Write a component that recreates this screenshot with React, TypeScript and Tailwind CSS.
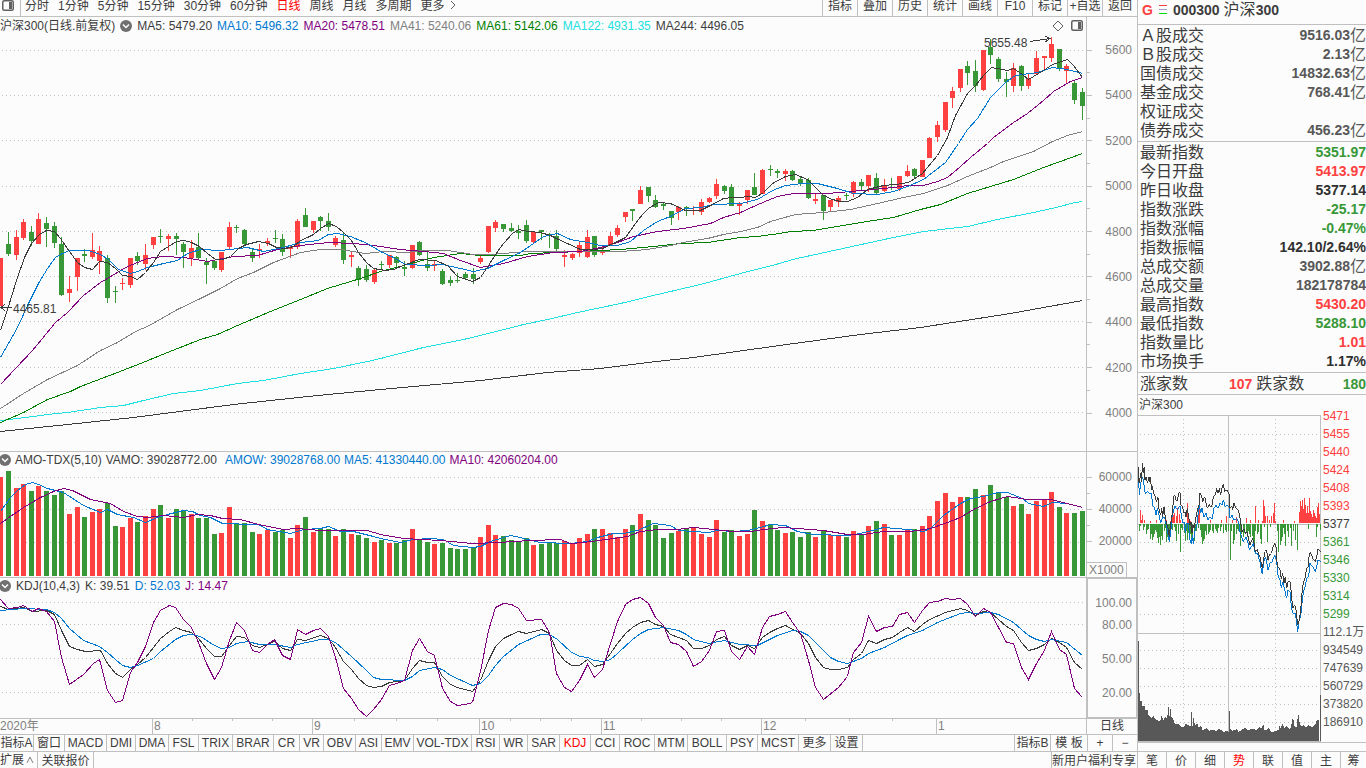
// ─── Index workstation: daily chart, indicators and quote panel ───────────────
import type { ReactNode } from 'react'

// ── Colours ───────────────────────────────────────────────────────────────────
const RED = '#ff4040'
const GREEN = '#389838'
const DARK = '#3c3c3c'
const BLUE = '#0078d0'
const PURPLE = '#800080'
const GRID = '#c0c0c0'

// ── Chart data ────────────────────────────────────────────────────────────────
// One session per entry: direction, high, body top, body bottom, low
const CANDLES = `r 258 258 306 306|g 232 244 254 256|r 230 237 255 260|r 219 222 238 240|g 226 232 241 246|r 213 219 244 244|g 217 223 229 247|g 222 226 243 248|g 237 244 295 296|r 276 289 293 302
r 258 258 277 291|g 249 254 256 262|r 233 250 257 259|r 246 251 261 274|g 255 258 298 303|g 286 291 292 303|r 278 283 284 290|r 258 258 285 288|g 252 256 261 265|r 244 255 264 270
r 237 237 245 249|g 229 236 237 243|r 234 236 239 251|g 233 236 239 255|g 242 244 252 268|r 240 248 258 266|g 233 247 258 259|g 258 262 265 284|g 261 261 268 270|r 252 252 270 272
r 222 227 247 249|g 225 227 228 233|g 229 230 244 245|g 249 252 258 262|r 244 249 250 258|r 238 241 243 246|g 230 238 239 243|g 234 239 252 256|r 246 247 249 258|r 219 221 247 249
g 208 215 227 227|r 221 221 230 233|g 216 217 221 231|g 213 221 227 231|r 236 238 245 247|g 233 240 260 264|r 252 255 257 267|g 266 268 280 286|g 265 269 280 282|r 269 270 282 284
g 261 264 265 270|r 255 255 265 268|g 256 257 263 267|g 261 267 269 276|r 245 245 268 269|g 241 242 255 256|g 252 264 268 271|r 261 264 266 271|g 269 271 284 285|g 276 280 283 286
g 273 280 281 283|g 272 274 278 279|g 268 274 279 284|r 256 258 262 264|r 226 226 252 253|r 220 222 228 232|g 224 224 229 232|g 223 228 231 232|g 225 231 233 239|g 220 225 241 243
r 232 232 242 244|g 230 230 232 240|g 233 234 235 248|g 230 236 249 251|r 250 255 257 267|r 253 254 258 260|r 241 245 253 257|r 230 237 257 258|g 236 236 255 257|r 245 250 253 255
r 232 236 245 246|r 225 228 235 237|r 212 212 217 222|g 209 209 211 221|r 186 190 204 204|g 187 187 196 202|g 195 200 207 208|g 202 204 206 210|g 211 211 218 225|r 206 207 212 220
g 206 207 209 216|r 206 210 211 215|r 199 202 212 215|r 197 198 202 203|r 179 184 196 199|g 185 186 191 194|g 184 187 206 206|r 202 204 206 215|r 190 190 200 204|g 173 187 195 195
r 169 170 194 194|g 165 169 170 176|g 169 171 173 178|r 169 171 174 181|g 170 171 180 181|g 177 179 183 186|g 178 180 198 199|r 194 199 201 204|g 195 195 211 220|r 200 200 207 211
r 196 198 202 207|g 193 195 196 200|r 181 182 194 197|g 179 182 186 191|r 175 175 186 192|g 173 178 193 194|r 179 185 191 192|g 178 184 185 190|r 176 176 189 191|r 165 171 176 177
g 168 169 176 178|r 160 160 177 177|r 137 138 158 158|r 121 125 137 142|r 102 102 130 132|r 87 91 98 108|r 69 69 88 92|g 61 66 73 85|g 60 71 86 92|r 50 50 90 91
g 39 47 55 64|g 57 59 79 82|g 72 79 82 97|r 63 68 86 92|g 65 66 86 91|r 74 78 86 89|r 51 58 74 74|r 56 56 58 70|r 37 44 58 62|g 49 49 69 71
r 64 66 71 84|g 81 83 100 104|g 88 92 106 120`
  .split(/[|\n]/)
  .map(row => {
    const [dir, ...ys] = row.split(' ')
    const [high, top, bottom, low] = ys.map(Number)
    return { color: dir === 'r' ? RED : GREEN, high, top, bottom, low }
  })

const AMOUNTS = [
  99, 105, 88, 92, 85, 90, 85, 81, 85, 62, 69, 59, 64, 67, 73, 50, 49, 58, 54, 60, 67, 71, 58, 67, 65, 62, 58, 58, 42,
  43, 69, 53, 53, 44, 42, 46, 44, 46, 38, 51, 59, 44, 47, 47, 40, 47, 42, 41, 38, 34, 36, 33, 33, 36, 47, 37, 34, 32,
  33, 28, 27, 27, 29, 39, 51, 41, 40, 36, 35, 38, 31, 32, 33, 33, 35, 33, 38, 42, 47, 47, 43, 39, 47, 51, 62, 56, 51,
  38, 43, 45, 47, 49, 42, 39, 56, 44, 46, 40, 42, 66, 55, 52, 46, 43, 44, 39, 44, 39, 46, 41, 41, 39, 45, 42, 50, 55,
  52, 41, 41, 46, 47, 50, 60, 75, 83, 74, 79, 79, 87, 81, 91, 83, 79, 70, 72, 62, 75, 76, 84, 69, 63, 63, 65,
]

const MAIN_LINES = [
  {
    color: DARK,
    points: '0,431 67,424 133,417 233,404 317,395 380,389 480,380 547,372 600,368 647,362 693,357 779,345 860,334 920,327 1010,313 1082,300',
  },
  {
    color: '#20e0e0',
    points: '0,420 33,416 47,414 67,412 100,407 123,405 143,400 173,393 200,390 237,383 263,380 300,373 333,368 367,361 380,358 423,347 463,339 500,330 523,324 547,319 577,312 620,303 657,294 700,284 740,273 779,263 792,259 847,247 893,237 923,231 967,226 997,219 1033,212 1060,206 1070,203 1082,201',
  },
  {
    color: '#008000',
    points: '0,422 23,412 47,399 70,391 80,386 117,372 140,363 167,352 200,339 217,334 237,325 270,311 300,299 327,288 360,278 380,271 403,265 433,257 460,253 480,255 520,255 530,253 580,251 620,249 653,246 680,243 707,242 740,237 757,236 779,233 790,231 813,230 837,226 873,220 893,217 920,209 940,204 967,193 990,186 1013,179 1043,167 1060,161 1082,153',
  },
  {
    color: '#808080',
    points: '0,408 23,393 47,379 77,365 100,350 117,342 137,330 147,326 177,309 200,298 220,288 237,278 253,272 273,262 300,252 320,249 340,249 365,253 383,251 407,252 423,250 447,250 473,254 490,254 527,251 580,251 620,251 647,249 670,245 683,242 707,238 723,234 740,231 757,227 770,221 777,219 795,214 823,212 850,209 877,203 903,197 923,193 947,185 967,176 990,167 1003,161 1033,151 1052,141 1067,135 1082,131',
  },
  {
    color: PURPLE,
    points: '0,384 15,368 32,350 55,322 67,312 83,295 100,282 117,272 127,266 147,258 163,256 183,257 207,261 233,256 257,255 277,249 300,245 328,242 353,243 373,245 400,249 423,251 443,253 460,260 480,267 503,263 527,256 553,252 580,251 600,247 617,242 633,236 657,231 683,228 710,223 723,217 740,212 753,206 767,200 777,196 793,193 827,193 850,191 873,189 893,187 907,185 923,185 937,181 947,177 960,166 970,157 987,143 993,137 1013,122 1027,113 1043,100 1053,91 1070,81 1082,77',
  },
  {
    color: BLUE,
    points: '0,357 8,343 17,327 28,303 38,283 47,268 55,257 62,253 69,250 88,250 100,254 108,259 118,269 130,273 137,271 147,267 163,263 177,260 187,253 200,249 220,250 247,247 263,251 283,247 300,242 318,240 328,234 337,233 350,236 367,243 380,251 393,257 405,264 428,265 442,264 460,268 473,271 487,268 503,260 520,252 533,243 543,236 557,233 570,239 587,242 600,245 617,245 630,241 643,230 657,221 670,216 685,208 700,207 713,204 740,203 757,199 767,193 772,190 785,185 802,183 817,183 837,188 853,193 877,194 893,191 907,186 923,179 945,162 958,143 967,129 977,118 990,97 1005,82 1015,75 1037,72 1052,67 1067,69 1082,73',
  },
  {
    color: DARK,
    points: '0,330 8,306 16,280 24,257 31,243 39,234 46,230 54,231 60,238 69,251 77,262 84,267 92,269 99,261 107,262 115,268 122,275 130,276 137,279 145,272 153,262 160,251 168,246 176,241 184,240 191,242 199,246 207,253 215,259 222,259 230,256 238,248 246,244 258,241 268,243 276,247 285,248 293,246 300,240 307,237 313,234 320,228 328,223 336,226 343,232 351,240 358,252 366,262 373,268 385,270 393,269 405,264 419,259 435,260 447,265 457,276 472,281 480,277 488,265 495,254 503,243 512,233 518,229 528,231 540,232 550,235 558,239 567,243 580,249 593,249 602,248 613,243 625,237 635,223 642,214 648,208 658,202 670,203 685,210 700,210 710,205 723,198 733,197 740,197 747,196 755,197 763,192 772,183 785,176 795,174 807,179 815,187 823,195 832,199 840,201 847,201 857,197 867,189 875,187 883,185 895,184 908,182 922,173 937,155 947,137 955,115 967,93 975,85 983,75 991,67 1007,70 1013,68 1022,74 1028,79 1043,70 1052,64 1067,59 1073,65 1082,77',
  },
]

const AMO_LINES = [
  {
    color: BLUE,
    points: '0,511 10,497 17,490 25,484 32,482 38,484 47,488 55,490 63,492 83,505 100,512 107,509 117,514 133,517 145,522 157,517 167,514 183,510 192,511 200,515 210,517 222,523 233,523 243,524 258,524 267,529 290,533 303,529 320,528 328,526 340,531 353,531 373,536 380,538 400,542 413,539 430,538 443,539 453,545 472,547 480,546 490,541 503,537 510,535 520,537 527,539 540,542 570,543 587,541 597,537 613,533 623,533 637,530 653,523 670,525 678,530 708,532 717,530 733,531 747,530 760,527 770,524 785,525 797,531 813,534 847,535 860,533 883,527 907,529 923,531 930,528 943,515 960,503 970,498 983,496 997,492 1007,492 1022,498 1028,503 1043,506 1052,502 1067,503 1082,507',
  },
  {
    color: PURPLE,
    points: '0,523 7,518 23,507 40,497 53,491 63,488 72,490 90,499 110,503 123,511 137,516 147,517 163,515 183,517 197,514 210,515 222,518 240,519 258,524 283,529 297,528 320,530 367,530 380,534 403,538 440,540 472,543 497,542 530,540 560,539 570,543 583,542 613,538 627,536 640,531 657,529 677,529 693,527 713,529 733,531 750,531 763,529 783,527 823,530 847,534 863,534 883,531 910,531 930,528 947,522 960,517 973,509 990,501 1007,496 1027,499 1050,499 1067,503 1082,507',
  },
]

const KDJ_LINES = [
  {
    color: DARK,
    points: '0,606 8,609 23,607 32,611 46,610 54,614 61,630 69,646 77,649 85,651 100,650 107,663 115,673 122,677 130,669 137,664 145,657 153,647 160,638 169,631 175,627 183,630 191,632 198,638 206,648 214,656 221,656 229,645 236,636 244,637 252,645 259,647 274,641 282,648 290,650 297,639 305,640 320,635 328,638 335,647 343,661 351,669 358,678 366,685 373,687 381,686 389,682 404,680 412,668 419,660 427,662 434,662 442,676 450,684 457,687 472,691 480,680 488,660 495,646 503,638 511,634 518,631 526,633 541,629 549,633 556,650 564,660 571,665 579,665 587,659 594,666 602,664 610,653 617,643 625,633 632,627 640,622 648,620 655,624 663,626 670,634 678,637 686,640 693,648 701,648 709,645 716,639 724,636 731,645 739,649 747,645 754,648 762,637 769,632 777,628 785,625 800,633 808,643 815,657 823,667 830,669 838,669 847,667 853,659 861,653 868,640 876,643 884,639 892,637 899,632 907,627 914,631 922,624 929,619 945,612 960,608 967,610 975,615 983,611 990,612 998,619 1006,626 1013,630 1021,642 1028,650 1036,648 1044,644 1051,638 1059,642 1066,647 1074,662 1082,669',
  },
  {
    color: BLUE,
    points: '0,610 23,608 46,609 54,612 61,618 69,628 83,640 99,646 107,652 115,659 122,665 130,667 137,665 153,658 160,651 175,639 183,635 191,634 200,636 214,645 221,648 229,647 236,643 247,641 259,644 274,644 290,647 297,644 320,639 328,639 335,642 351,656 366,670 373,677 381,679 404,680 412,676 419,670 434,667 442,669 450,675 472,685 480,683 488,675 495,665 503,656 518,644 540,634 549,634 557,639 571,652 580,656 587,657 594,660 603,661 610,659 617,653 632,639 640,633 648,629 663,627 678,630 686,634 693,639 708,643 724,640 739,644 757,645 769,639 777,635 792,630 800,631 808,635 823,650 830,657 838,661 847,663 861,658 868,653 884,647 899,639 907,635 922,630 937,622 960,613 968,612 975,613 990,612 998,614 1013,622 1028,635 1036,639 1044,641 1051,639 1066,642 1082,655',
  },
  {
    color: PURPLE,
    points: '0,599 8,608 17,607 23,605 32,611 38,608 46,611 54,621 61,657 69,684 83,674 93,663 99,659 107,690 115,702 122,700 130,672 137,662 145,646 153,622 160,610 169,605 175,607 183,619 191,627 198,642 206,663 214,679 221,667 229,640 236,622 244,630 252,650 259,652 267,644 274,639 282,655 290,659 297,629 305,634 313,630 320,628 328,636 335,657 343,688 351,698 358,709 366,716 373,709 381,699 389,685 396,683 404,680 412,650 419,638 427,651 434,655 442,688 450,701 457,705 465,704 472,702 480,671 488,630 495,607 503,603 511,604 518,608 526,620 541,619 549,632 556,673 564,687 571,691 579,680 587,664 594,677 602,669 610,643 617,621 625,604 632,599 640,597 648,603 655,617 663,625 670,642 678,644 686,651 693,666 701,661 709,650 716,631 724,630 731,651 739,659 747,646 754,654 762,627 769,616 777,614 785,611 792,622 800,633 808,660 815,687 823,699 838,687 847,676 853,652 861,642 868,616 876,631 884,627 892,626 899,614 907,612 914,622 922,610 929,602 937,601 945,598 952,599 960,598 967,604 975,616 983,608 990,612 1006,642 1013,643 1021,667 1028,679 1036,663 1044,650 1051,631 1059,649 1066,654 1074,688 1082,697',
  },
]

// Intraday panel, coordinates in thirds of a pixel
const MINI_INDEX = '24,262 26,300 28,310 32,280 34,305 38,248 40,280 43,262 45,300 49,290 52,310 57,290 60,305 62,292 64,330 68,318 70,340 76,350 79,365 84,352 86,385 92,405 95,385 98,410 102,380 106,415 110,430 114,445 118,470 121,440 124,420 128,390 131,350 134,345 138,360 142,362 146,338 150,338 153,375 158,380 161,400 165,395 168,410 172,385 176,410 180,435 183,425 186,460 189,435 192,445 196,425 200,400 204,385 208,370 210,340 214,345 218,365 224,350 228,370 232,385 238,372 242,382 246,375 250,350 256,345 260,325 264,340 268,325 272,345 276,325 280,312 284,335 290,330 297,340 298,385 305,378 308,390 312,368 318,385 324,390 328,400 332,430 336,455 342,448 346,460 352,455 356,480 360,495 364,485 368,475 372,490 376,515 382,508 386,525 390,530 394,550 397,565 400,545 404,515 410,510 414,540 418,525 424,520 428,505 434,490 438,500 441,545 444,560 450,570 454,598 458,580 462,610 466,590 470,625 474,605 480,605 484,640 488,685 494,675 498,690 503,735 508,720 512,690 516,640 520,605 524,600 530,565 534,562 538,520 542,518 548,535 556,545 560,530 564,508 572,514'
const MINI_LEAD = '24,285 26,300 28,345 32,310 38,290 42,315 46,342 52,335 60,340 64,338 68,375 74,385 78,405 82,385 86,400 92,430 97,412 104,412 110,440 118,485 122,460 126,410 130,395 134,378 142,390 150,378 154,405 158,430 162,425 166,460 170,430 175,430 180,480 184,492 187,465 190,492 194,455 200,440 204,405 208,375 212,400 216,385 222,412 228,400 234,420 240,410 246,418 252,385 258,375 264,385 270,370 276,375 280,360 286,380 292,376 298,380 300,415 306,405 312,420 320,415 326,425 330,455 336,475 340,485 348,470 354,490 358,510 364,500 370,490 376,522 382,520 390,545 394,570 397,582 401,545 406,530 410,545 414,570 420,550 426,545 434,525 440,545 444,585 450,600 454,625 458,605 464,630 470,655 474,630 480,635 484,680 488,700 496,700 500,730 503,757 506,725 512,710 516,670 520,635 526,620 530,595 536,590 540,550 548,560 556,575 560,560 564,540 572,545'
const MINI_UP = '31 38,34 10,37 25,42 8,60 5,80 10,110 10,120 5,127 50,130 24,133 30,140 22,143 45,147 28,150 10,172 60,175 20,180 5,202 20,205 38,208 50,240 10,275 10,290 20,308 10,318 18,330 5,348 15,362 8,376 52,386 8,396 6,400 68,404 50,407 20,412 22,418 10,425 20,430 30,433 60,436 5,460 8,494 5,508 32,511 65,514 50,517 70,520 42,523 76,526 55,529 30,532 52,535 30,538 76,541 35,544 26,547 18,550 38,553 30,556 22,559 15,562 48,565 60,568 28'
const MINI_DOWN = '27 22,32 6,40 18,44 8,48 30,52 18,55 15,60 45,63 30,66 48,70 40,74 30,77 18,80 25,83 42,86 58,89 40,92 62,95 35,97 48,102 20,105 12,108 55,112 40,116 20,119 52,122 35,127 18,132 10,136 22,140 50,145 30,151 84,155 12,158 18,162 28,166 50,169 20,172 48,175 26,178 40,181 30,184 58,188 45,192 50,196 15,200 20,205 12,210 18,213 40,216 60,219 50,222 45,226 20,230 34,234 30,238 25,242 18,246 20,251 26,256 15,259 20,262 28,266 12,270 22,275 10,280 28,285 18,290 25,296 20,301 108,305 22,310 60,314 48,318 30,322 16,326 20,331 66,335 30,340 40,344 28,348 25,352 40,356 20,359 30,362 40,366 35,369 50,373 70,377 22,382 30,386 24,390 45,395 60,404 10,412 55,420 10,442 20,446 85,450 62,453 50,456 40,460 12,464 30,467 65,471 20,475 38,480 12,485 65,490 20,497 48,502 78,534 15,558 38,562 10,572 18'
const MINI_VOLUME = '24,783 27,783 27,940 30,940 30,962 36,965 36,978 45,978 45,990 54,990 54,1005 60,1008 66,1015 70,1008 76,1018 84,1022 90,1025 95,1005 100,1020 106,1010 112,1015 114,980 117,980 117,1008 120,1008 121,986 124,986 124,1012 130,1018 134,1032 144,1032 150,1038 160,1043 168,1030 175,1036 182,1038 183,995 186,995 186,1038 190,1038 190,1015 193,1015 194,1038 202,1030 206,1042 214,1038 218,1050 230,1045 238,1052 252,1050 260,1054 268,1046 280,1056 290,1052 296,1056 296,993 299,993 300,1045 308,1052 320,1048 326,1056 338,1048 346,1042 354,1052 366,1046 380,1050 388,1040 394,1045 400,1034 404,1052 416,1045 424,1056 434,1054 446,1050 447,1036 452,1045 458,1032 464,1046 470,1036 478,1048 484,1040 486,1015 490,1018 494,1040 500,1040 502,1018 506,1005 509,1030 516,1040 522,1035 528,1044 536,1036 548,1042 556,1034 560,1020 567,1020'

const parsePairs = (list: string) => list.split(',').map(item => item.split(' ').map(Number))

// ── Header icons ──────────────────────────────────────────────────────────────
function PanelIcon() {
  return (
    <svg width="12" height="11" viewBox="0 0 12 11" fill="none" className="flex-none">
      <rect x="0.75" y="0.75" width="10.5" height="9.5" rx="1.5" stroke="#606060" strokeWidth="1.5" />
      <rect x="7" y="2" width="3" height="7" fill="#606060" />
    </svg>
  )
}

function FoldButton({ label }: { label: string }) {
  return (
    <button type="button" aria-label={label} className="flex-none">
      <svg width="12" height="12" viewBox="0 0 12 12" fill="none" className="block">
        <circle cx="6" cy="6" r="6" fill="#707070" />
        <path d="M3 4.5 6 7.5 9 4.5" stroke="#fcfcfc" strokeWidth="1.5" />
      </svg>
    </button>
  )
}

// ── Plot pieces ───────────────────────────────────────────────────────────────
type Line = { color: string; points: string }

function Plot({ viewBox, grid, children }: { viewBox: string; grid: number[]; children: ReactNode }) {
  return (
    <svg viewBox={viewBox} preserveAspectRatio="none" className="block min-h-0 w-full flex-1" shapeRendering="crispEdges">
      {grid.map(y => (
        <line key={y} x1="2" x2="1086" y1={y + 0.5} y2={y + 0.5} stroke={GRID} strokeDasharray="1 3" />
      ))}
      {children}
    </svg>
  )
}

function Lines({ items }: { items: Line[] }) {
  return (
    <g fill="none" transform="translate(0.5 0.5)">
      {items.map((line, i) => (
        <polyline key={i} points={line.points} stroke={line.color} />
      ))}
    </g>
  )
}

const barLeft = (i: number) => Math.round(0.885 + i * 7.615 - 2.5)

function CandlePlot() {
  return (
    <Plot viewBox="0 36 1086 415" grid={[50, 95, 140, 186, 231, 276, 321, 367, 412]}>
      {CANDLES.map((c, i) => (
        <g key={i} fill={c.color}>
          <rect x={barLeft(i) + 2} y={c.high} width="1" height={c.low - c.high} />
          <rect x={barLeft(i)} y={c.top} width="5" height={c.bottom - c.top} />
        </g>
      ))}
      <Lines items={MAIN_LINES} />
      <g stroke={DARK} fill="none">
        <path d="M1 307.5H12M5 304 1 307.5 5 311" />
        <path d="M1030 41.5 1050 38.5M1044 35.5 1050 38.5 1045 42" />
      </g>
      <g fill={DARK} className="text-[12px]">
        <text x="13" y="313">4465.81</text>
        <text x="984" y="47">5655.48</text>
      </g>
    </Plot>
  )
}

function AmountPlot() {
  return (
    <Plot viewBox="0 468 1086 109" grid={[477, 509, 542]}>
      {AMOUNTS.map((h, i) => (
        <rect key={i} x={barLeft(i)} y={576 - h} width="5" height={h} fill={CANDLES[i].color} />
      ))}
      <Lines items={AMO_LINES} />
    </Plot>
  )
}

function AxisRow({ label }: { label?: string }) {
  return (
    <div className="flex h-4 items-center justify-between pr-[5px] text-[#808080]">
      <span className={label ? 'h-px w-[5px] bg-[#c0c0c0]' : 'h-px w-[3px] bg-[#c0c0c0]'} />
      {label}
    </div>
  )
}

// ── Toolbar ───────────────────────────────────────────────────────────────────
const PERIODS = ['分时', '1分钟', '5分钟', '15分钟', '30分钟', '60分钟', '日线', '周线', '月线', '多周期', '更多']
const TOOLS = ['指标', '叠加', '历史', '统计', '画线', 'F10', '标记', '+自选', '返回']

function Toolbar() {
  return (
    <nav className="flex h-[17px] flex-none overflow-hidden border-b border-[#c0c0c0] leading-3">
      <button type="button" aria-label="侧栏" className="flex w-[21px] flex-none items-start border-r border-[#c0c0c0] pl-0.5">
        <PanelIcon />
      </button>
      <div className="flex items-start gap-[9px] pl-1">
        {PERIODS.map(p => (
          <button key={p} type="button" className={p === '日线' ? 'text-[#ff0000]' : ''}>
            {p}
          </button>
        ))}
        <svg width="6" height="10" viewBox="0 0 6 10" fill="none" className="-ml-1">
          <path d="M1 1 5 5 1 9" stroke="#606060" />
        </svg>
      </div>
      <div className="ml-auto flex items-start">
        {TOOLS.map(t => (
          <button key={t} type="button" className="h-full w-[35px] flex-none border-l border-[#c0c0c0] pb-1">
            {t}
          </button>
        ))}
      </div>
    </nav>
  )
}

// ── Chart sections ────────────────────────────────────────────────────────────
const MA_VALUES = [
  { text: 'MA5: 5479.20', tone: '' },
  { text: 'MA10: 5496.32', tone: 'text-[#0078d0]' },
  { text: 'MA20: 5478.51', tone: 'text-[#800080]' },
  { text: 'MA41: 5240.06', tone: 'text-[#808080]' },
  { text: 'MA61: 5142.06', tone: 'text-[#008000]' },
  { text: 'MA122: 4931.35', tone: 'text-[#20e0e0]' },
  { text: 'MA244: 4496.05', tone: '' },
]

function MainSection() {
  const levels = [5600, 5400, 5200, 5000, 4800, 4600, 4400, 4200, 4000]
  return (
    <section className="flex min-h-0 flex-1 border-b border-[#c0c0c0]">
      <div className="flex min-w-0 flex-1 flex-col border-r border-[#c0c0c0]">
        <header className="flex h-[19px] flex-none items-center gap-[5px] pb-0.5 whitespace-nowrap">
          <h1>沪深300(日线.前复权)</h1>
          <FoldButton label="主图" />
          {MA_VALUES.map(m => (
            <span key={m.text} className={m.tone}>
              {m.text}
            </span>
          ))}
          <span className="ml-auto flex items-center gap-[7px] pr-[3px]">
            <svg width="12" height="12" viewBox="0 0 12 12" fill="none">
              <path d="M6 1 11 6 6 11 1 6Z" stroke="#606060" />
            </svg>
            <PanelIcon />
          </span>
        </header>
        <CandlePlot />
      </div>
      <div className="flex w-[50px] flex-none flex-col justify-between pt-[25px] pb-[30px]">
        {levels.flatMap((v, i) => [
          <AxisRow key={v} label={String(v)} />,
          i < levels.length - 1 && <AxisRow key={v - 100} />,
        ])}
      </div>
    </section>
  )
}

function AmountSection() {
  return (
    <section className="flex h-[126px] flex-none border-b border-[#c0c0c0]">
      <div className="flex min-w-0 flex-1 flex-col border-r border-[#c0c0c0]">
        <header className="-ml-px flex h-4 flex-none items-center gap-1 whitespace-nowrap">
          <FoldButton label="AMO-TDX" />
          <h2>AMO-TDX(5,10)</h2>
          <span>VAMO: 39028772.00</span>
          <span className="ml-1 text-[#0078d0]">AMOW: 39028768.00</span>
          <span className="text-[#0078d0]">MA5: 41330440.00</span>
          <span className="text-[#800080]">MA10: 42060204.00</span>
        </header>
        <AmountPlot />
      </div>
      <div className="flex w-[50px] flex-none flex-col pt-[17px]">
        <AxisRow label="60000" />
        <AxisRow />
        <AxisRow label="40000" />
        <AxisRow />
        <AxisRow label="20000" />
        <span className="mt-auto w-10 border-t border-r border-[#c0c0c0] pl-0.5 leading-[14px] text-[#808080]">X1000</span>
      </div>
    </section>
  )
}

function KdjSection() {
  return (
    <section className="flex h-[141px] flex-none border-b border-[#c0c0c0]">
      <div className="flex min-w-0 flex-1 flex-col border-r border-[#c0c0c0]">
        <header className="-ml-px flex h-4 flex-none items-center gap-[5px] whitespace-nowrap">
          <FoldButton label="KDJ" />
          <h2>KDJ(10,4,3)</h2>
          <span>K: 39.51</span>
          <span className="text-[#0078d0]">D: 52.03</span>
          <span className="text-[#800080]">J: 14.47</span>
        </header>
        <Plot viewBox="0 594 1086 124" grid={[602, 624, 658, 692]}>
          <Lines items={KDJ_LINES} />
        </Plot>
      </div>
      <div className="flex w-[50px] flex-none flex-col border border-[#c0c0c0] pt-4 pr-1 text-right leading-4 text-[#808080]">
        <span>100.00</span>
        <span className="mt-1.5">80.00</span>
        <span className="mt-[18px]">50.00</span>
        <span className="mt-[18px]">20.00</span>
      </div>
    </section>
  )
}

// ── Time axis ─────────────────────────────────────────────────────────────────
const MONTHS = [
  { label: '8', width: 'w-[160px]' },
  { label: '9', width: 'w-[167px]' },
  { label: '10', width: 'w-[122px]' },
  { label: '11', width: 'w-[160px]' },
  { label: '12', width: 'w-[175px]' },
  { label: '1', width: 'flex-1' },
]
const WEEK_TICKS = [192, 232, 272, 354, 396, 437, 510, 540, 571, 641, 681, 721, 805, 849, 892]

function TimeAxis() {
  return (
    <div className="flex h-4 flex-none border-b border-[#c0c0c0] leading-[15px] text-[#808080]">
      <div className="relative flex min-w-0 flex-1 border-r border-[#c0c0c0]">
        <svg viewBox="0 0 1086 2" preserveAspectRatio="none" className="absolute top-0 left-0 h-0.5 w-full">
          {WEEK_TICKS.map(x => (
            <rect key={x} x={x} y="0" width="1" height="2" fill={GRID} />
          ))}
        </svg>
        <span className="w-[152px]">2020年</span>
        {MONTHS.map(m => (
          <span key={m.label} className={`border-l border-[#c0c0c0] pl-px ${m.width}`}>
            {m.label}
          </span>
        ))}
      </div>
      <span className="w-[50px] flex-none text-center text-[#3c3c3c]">日线</span>
    </div>
  )
}

// ── Indicator tabs ────────────────────────────────────────────────────────────
const INDICATORS = [
  { label: '指标A', width: 'w-[34px]' },
  { label: '窗口', width: 'w-[31px]' },
  { label: 'MACD', width: 'w-[42px]' },
  { label: 'DMI', width: 'w-[29px]' },
  { label: 'DMA', width: 'w-[33px]' },
  { label: 'FSL', width: 'w-[30px]' },
  { label: 'TRIX', width: 'w-[34px]' },
  { label: 'BRAR', width: 'w-[41px]' },
  { label: 'CR', width: 'w-[26px]' },
  { label: 'VR', width: 'w-[24px]' },
  { label: 'OBV', width: 'w-[32px]' },
  { label: 'ASI', width: 'w-[26px]' },
  { label: 'EMV', width: 'w-[32px]' },
  { label: 'VOL-TDX', width: 'w-[58px]' },
  { label: 'RSI', width: 'w-[28px]' },
  { label: 'WR', width: 'w-[28px]' },
  { label: 'SAR', width: 'w-[32px]' },
  { label: 'KDJ', width: 'w-[31px]' },
  { label: 'CCI', width: 'w-[29px]' },
  { label: 'ROC', width: 'w-[35px]' },
  { label: 'MTM', width: 'w-[33px]' },
  { label: 'BOLL', width: 'w-[39px]' },
  { label: 'PSY', width: 'w-[31px]' },
  { label: 'MCST', width: 'w-[41px]' },
  { label: '更多', width: 'w-[32px]' },
  { label: '设置', width: 'w-[32px]' },
]
const TEMPLATE_BUTTONS = [
  { label: '指标B', width: 'w-[36px]' },
  { label: '模 板', width: 'w-[37px]' },
  { label: '+', width: 'w-[25px]' },
  { label: '−', width: 'w-[25px]' },
]

function IndicatorTabs() {
  return (
    <div className="flex h-[17px] flex-none overflow-hidden border-b border-[#c0c0c0] leading-4 whitespace-nowrap">
      {INDICATORS.map(t => (
        <button
          key={t.label}
          type="button"
          className={`flex flex-none justify-center border-r border-[#c0c0c0] ${t.width} ${t.label === 'KDJ' ? 'text-[#ff0000]' : ''}`}
        >
          {t.label}
        </button>
      ))}
      <div className="ml-auto flex">
        {TEMPLATE_BUTTONS.map(t => (
          <button key={t.label} type="button" className={`flex flex-none justify-center border-l border-[#c0c0c0] ${t.width}`}>
            {t.label}
          </button>
        ))}
      </div>
    </div>
  )
}

function BottomBar() {
  return (
    <div className="flex h-4 flex-none overflow-hidden leading-[18px] whitespace-nowrap">
      <button type="button" className="flex w-[38px] items-center gap-0.5 border-r border-[#c0c0c0]">
        扩展
        <svg width="8" height="8" viewBox="0 0 8 8" fill="none">
          <path d="M1 7 4 1 7 7" stroke="#808080" />
        </svg>
      </button>
      <button type="button" className="w-14 border-r border-[#c0c0c0]">
        关联报价
      </button>
      <a href="#benefits" className="ml-auto border-l border-[#c0c0c0] pr-px">
        新用户福利专享
      </a>
    </div>
  )
}

// ── Quote panel ───────────────────────────────────────────────────────────────
type Quote = { label: string; value: string; unit?: string; tone: string }

const TURNOVER: Quote[] = [
  { label: 'Ａ股成交', value: '9516.03', unit: '亿', tone: 'text-[#585858]' },
  { label: 'Ｂ股成交', value: '2.13', unit: '亿', tone: 'text-[#585858]' },
  { label: '国债成交', value: '14832.63', unit: '亿', tone: 'text-[#585858]' },
  { label: '基金成交', value: '768.41', unit: '亿', tone: 'text-[#585858]' },
  { label: '权证成交', value: '', tone: 'text-[#585858]' },
  { label: '债券成交', value: '456.23', unit: '亿', tone: 'text-[#585858]' },
]
const STATS: Quote[] = [
  { label: '最新指数', value: '5351.97', tone: 'text-[#389838]' },
  { label: '今日开盘', value: '5413.97', tone: 'text-[#ff4040]' },
  { label: '昨日收盘', value: '5377.14', tone: 'text-[#303030]' },
  { label: '指数涨跌', value: '-25.17', tone: 'text-[#389838]' },
  { label: '指数涨幅', value: '-0.47%', tone: 'text-[#389838]' },
  { label: '指数振幅', value: '142.10/2.64%', tone: 'text-[#303030]' },
  { label: '总成交额', value: '3902.88', unit: '亿', tone: 'text-[#585858]' },
  { label: '总成交量', value: '182178784', tone: 'text-[#585858]' },
  { label: '最高指数', value: '5430.20', tone: 'text-[#ff4040]' },
  { label: '最低指数', value: '5288.10', tone: 'text-[#389838]' },
  { label: '指数量比', value: '1.01', tone: 'text-[#ff4040]' },
  { label: '市场换手', value: '1.17%', tone: 'text-[#303030]' },
]

function QuoteList({ items }: { items: Quote[] }) {
  return (
    <dl className="border-b border-[#c0c0c0] pt-px pb-px">
      {items.map(q => (
        <div key={q.label} className="flex h-[19px] items-center justify-between pl-0.5 leading-[19px]">
          <dt className="text-[16px]">{q.label}</dt>
          <dd className={`flex text-[14px] font-bold ${q.tone}`}>
            {q.value}
            {q.unit && <span className="text-[16px] font-normal">{q.unit}</span>}
          </dd>
        </div>
      ))}
    </dl>
  )
}

// ── Intraday chart ────────────────────────────────────────────────────────────
const MINI_LABELS = [
  { tone: 'text-[#ff4040]', values: ['5471', '5455', '5440', '5424', '5408', '5393'] },
  { tone: 'text-[#3c3c3c]', values: ['5377'] },
  { tone: 'text-[#389838]', values: ['5361', '5346', '5330', '5314', '5299'] },
  { tone: 'text-[#585858]', values: ['112.1万', '934549', '747639', '560729', '373820', '186910'] },
]
const MINI_GRID = [434, 452, 470, 488, 506, 542, 560, 578, 596, 614, 650, 668, 686, 704, 722]

function IntradayPlot() {
  return (
    <svg
      viewBox="1138 415 183 327"
      preserveAspectRatio="none"
      className="block h-full w-[183px] flex-none"
      shapeRendering="crispEdges"
      fill="none"
    >
      <g stroke={GRID}>
        {MINI_GRID.map(y => (
          <line key={y} x1="1140" x2="1320" y1={y + 0.5} y2={y + 0.5} strokeDasharray="1 3" />
        ))}
        <path d="M1183.5 419V740M1275.5 419V740" strokeDasharray="1 3" />
        <path d="M1138 415.5H1321M1138 633.5H1321M1138 524H1321M1228.5 415V741M1320.5 415V741M1138 741.5H1321" />
      </g>
      <g transform="translate(1130 380) scale(0.33333)">
        {parsePairs(MINI_UP).map(([x, h]) => (
          <rect key={x} x={x - 1} y={429 - h} width="3" height={h} fill={RED} />
        ))}
        {parsePairs(MINI_DOWN).map(([x, h]) => (
          <rect key={x} x={x - 1} y="432" width="3" height={h} fill={GREEN} />
        ))}
        <polygon points={`24,1082 ${MINI_VOLUME} 567,1082`} fill="#585858" />
        <rect x="570" y="945" width="3" height="137" fill="#585858" />
        <polyline points={MINI_LEAD} stroke={BLUE} strokeWidth="3" />
        <polyline points={MINI_INDEX} stroke={DARK} strokeWidth="3" />
      </g>
    </svg>
  )
}

const SIDE_TABS = ['笔', '价', '细', '势', '联', '值', '主', '筹']

function QuotePanel() {
  return (
    <aside className="flex w-[229px] flex-none flex-col overflow-hidden border-l border-[#c0c0c0]">
      <header className="flex h-[25px] flex-none items-center border-b border-[#c0c0c0] pb-1 pl-1 text-[14px] font-bold whitespace-nowrap">
        <span className="text-[#ff4040]">G</span>
        <svg width="8" height="10" viewBox="0 0 8 10" className="mr-1.5 ml-1.5">
          <rect y="0" width="8" height="1" fill="#ff4040" />
          <rect y="4" width="8" height="1" fill="#a0a0c0" />
          <rect y="8" width="8" height="1" fill="#00e000" />
        </svg>
        000300
        <span className="ml-1 text-[16px] font-normal">沪深</span>
        300
      </header>
      <QuoteList items={TURNOVER} />
      <QuoteList items={STATS} />
      <div className="flex h-[22px] flex-none items-center border-b border-[#c0c0c0] pl-0.5 text-[14px] font-bold whitespace-nowrap">
        <span className="w-[89px] text-[16px] font-normal">涨家数</span>
        <span className="text-[#ff4040]">107</span>
        <span className="ml-1 text-[16px] font-normal">跌家数</span>
        <span className="ml-auto text-[#389838]">180</span>
      </div>
      <h2 className="h-5 flex-none pl-px leading-5">沪深300</h2>
      <div className="flex min-h-0 flex-1">
        <IntradayPlot />
        <div className="-mt-2 flex min-w-0 flex-1 flex-col pl-0.5 leading-[18px] whitespace-nowrap">
          {MINI_LABELS.map(group =>
            group.values.map(v => (
              <span key={v} className={group.tone}>
                {v}
              </span>
            )),
          )}
        </div>
      </div>
      <div className="flex h-[26px] flex-none flex-col border-t border-[#c0c0c0] pt-2">
        <div className="flex h-[17px] border-t border-[#c0c0c0] leading-[18px]">
          {SIDE_TABS.map(t => (
            <button
              key={t}
              type="button"
              className={`w-[29px] border-r border-[#c0c0c0] last:w-auto last:flex-1 last:border-r-0 ${t === '势' ? 'text-[#ff0000]' : ''}`}
            >
              {t}
            </button>
          ))}
        </div>
      </div>
    </aside>
  )
}

// ── App ───────────────────────────────────────────────────────────────────────
export default function App() {
  return (
    <div className="flex h-screen overflow-hidden bg-[#fcfcfc] font-['Liberation_Sans','Noto_Sans_CJK_SC',sans-serif] text-[12px] leading-4 text-[#3c3c3c]">
      <main className="flex min-w-0 flex-1 flex-col">
        <Toolbar />
        <MainSection />
        <AmountSection />
        <KdjSection />
        <TimeAxis />
        <IndicatorTabs />
        <BottomBar />
      </main>
      <QuotePanel />
    </div>
  )
}
